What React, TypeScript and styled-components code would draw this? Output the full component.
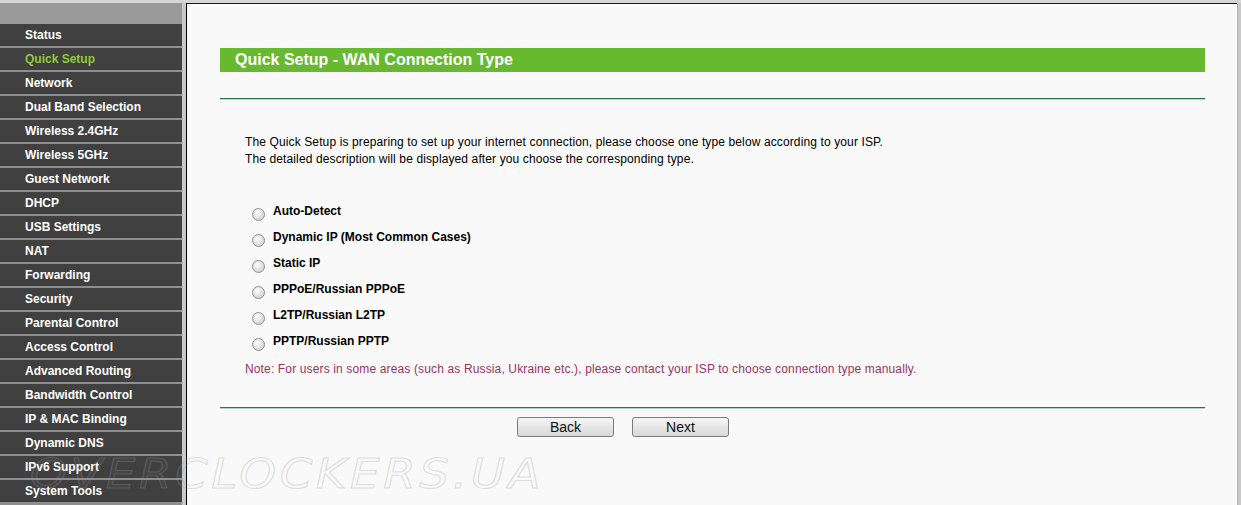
import React from "react";
import styled, { createGlobalStyle } from "styled-components";

const Global = createGlobalStyle`
  html, body { margin: 0; padding: 0; }
  body {
    width: 1241px;
    height: 505px;
    overflow: hidden;
    font-family: "Liberation Sans", Arial, sans-serif;
    background: #d6d6d6;
  }
`;

const Page = styled.div`
  position: relative;
  width: 1241px;
  height: 505px;
  display: flex;
  flex-direction: column;
  overflow: hidden;
`;

const TopBand = styled.div`
  height: 3px;
  background: #d6d6d6;
  flex: none;
`;

const Main = styled.div`
  flex: 1;
  display: flex;
  min-height: 0;
`;

const Sidebar = styled.nav`
  width: 182px;
  flex: none;
  display: flex;
  flex-direction: column;
  background: #8e8e8e;
`;

const SideHeader = styled.div`
  height: 21px;
  background: #9a9a9a;
`;

const MenuItem = styled.div<{ $active?: boolean }>`
  height: 22px;
  line-height: 22px;
  margin-bottom: 2px;
  padding-left: 25px;
  background: #404040;
  color: ${(p) => (p.$active ? "#8fcb34" : "#ffffff")};
  font-size: 12px;
  font-weight: bold;
  white-space: nowrap;
`;

const Gutter = styled.div`
  width: 4px;
  flex: none;
  background: #c9c9c9;
`;

const RightGutter = styled.div`
  width: 4px;
  flex: none;
  background: #c9c9c9;
  border-left: 1px solid #b4b4b4;
  box-sizing: border-box;
`;

const Content = styled.main`
  flex: 1;
  background: #f9f9f9;
  border-left: 1px solid #000;
  border-top: 1px solid #1a1a1a;
  padding: 44px 32px 0 33px;
  display: flex;
  flex-direction: column;
`;

const TitleBar = styled.div`
  height: 24px;
  line-height: 24px;
  background: #67b930;
  color: #fff;
  font-size: 16px;
  font-weight: bold;
  padding-left: 15px;
`;

const Rule = styled.div<{ $top: number }>`
  margin-top: ${(p) => p.$top}px;
  height: 1px;
  background: #23774a;
  border-bottom: 1px solid #b7d8c4;
`;

const Intro = styled.p`
  margin: 34px 0 0 25px;
  font-size: 12px;
  line-height: 17px;
  letter-spacing: 0.12px;
  color: #000;
`;

const Options = styled.div`
  margin-top: 30px;
  display: flex;
  flex-direction: column;
`;

const OptionRow = styled.label`
  height: 26px;
  display: flex;
  align-items: center;
  padding-left: 32px;
  font-size: 12px;
  font-weight: bold;
  color: #000;
`;

const Radio = styled.span`
  width: 11px;
  height: 11px;
  border-radius: 50%;
  border: 1px solid #909090;
  background: radial-gradient(circle at 40% 35%, #ffffff 0%, #e4e4e4 45%, #c4c4c4 100%);
  margin: 6px 8px 0 0;
  flex: none;
`;

const Note = styled.div`
  margin: 2px 0 0 25px;
  height: 26px;
  line-height: 26px;
  font-size: 12px;
  letter-spacing: 0.14px;
  color: #993366;
`;

const Buttons = styled.div`
  margin-top: 8px;
  padding-left: 297px;
  display: flex;
  gap: 18px;
`;

const Button = styled.button`
  width: 97px;
  height: 20px;
  padding: 0;
  border: 1px solid #7b7b7b;
  border-radius: 3px;
  background: linear-gradient(#f6f6f6, #e6e6e6 50%, #d9d9d9);
  font-family: "Liberation Sans", Arial, sans-serif;
  font-size: 14px;
  line-height: 18px;
  color: #111;
`;

const Watermark = styled.div`
  position: absolute;
  left: 30px;
  top: 451px;
  font-family: "DejaVu Sans", sans-serif;
  font-style: italic;
  font-size: 40px;
  letter-spacing: 3px;
  color: rgba(255, 255, 255, 0.05);
  -webkit-text-stroke: 1px rgba(150, 150, 150, 0.3);
  transform: scaleX(1.17);
  transform-origin: left top;
  pointer-events: none;
  white-space: nowrap;
`;

const menu = [
  "Status",
  "Quick Setup",
  "Network",
  "Dual Band Selection",
  "Wireless 2.4GHz",
  "Wireless 5GHz",
  "Guest Network",
  "DHCP",
  "USB Settings",
  "NAT",
  "Forwarding",
  "Security",
  "Parental Control",
  "Access Control",
  "Advanced Routing",
  "Bandwidth Control",
  "IP & MAC Binding",
  "Dynamic DNS",
  "IPv6 Support",
  "System Tools",
];

const options = [
  "Auto-Detect",
  "Dynamic IP (Most Common Cases)",
  "Static IP",
  "PPPoE/Russian PPPoE",
  "L2TP/Russian L2TP",
  "PPTP/Russian PPTP",
];

export default function App() {
  return (
    <>
      <Global />
      <Page>
        <TopBand />
        <Main>
          <Sidebar>
            <SideHeader />
            {menu.map((m) => (
              <MenuItem key={m} $active={m === "Quick Setup"}>
                {m}
              </MenuItem>
            ))}
          </Sidebar>
          <Gutter />
          <Content>
            <TitleBar>Quick Setup - WAN Connection Type</TitleBar>
            <Rule $top={26} />
            <Intro>
              The Quick Setup is preparing to set up your internet connection, please choose one type below according to your ISP.
              <br />
              The detailed description will be displayed after you choose the corresponding type.
            </Intro>
            <Options>
              {options.map((o) => (
                <OptionRow key={o}>
                  <Radio />
                  {o}
                </OptionRow>
              ))}
            </Options>
            <Note>
              Note: For users in some areas (such as Russia, Ukraine etc.), please contact your ISP to choose connection type manually.
            </Note>
            <Rule $top={25} />
            <Buttons>
              <Button>Back</Button>
              <Button>Next</Button>
            </Buttons>
          </Content>
          <RightGutter />
        </Main>
        <Watermark>OVERCLOCKERS.UA</Watermark>
      </Page>
    </>
  );
}
